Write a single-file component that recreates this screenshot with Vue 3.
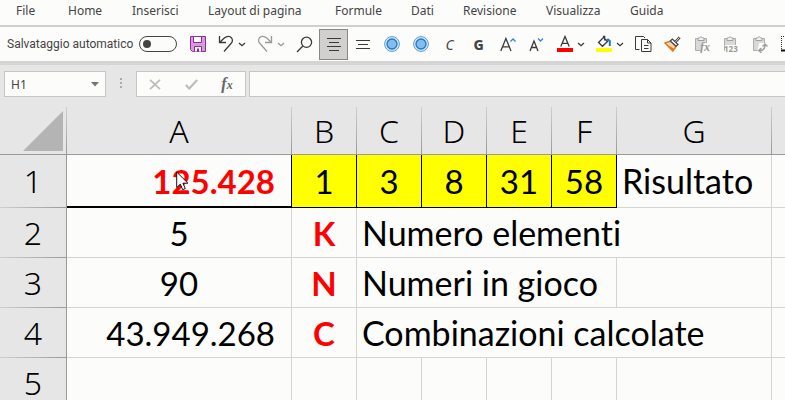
<script setup>
import { ref } from 'vue'

const tabs = ['File', 'Home', 'Inserisci', 'Layout di pagina', 'Formule', 'Dati', 'Revisione', 'Visualizza', 'Guida']
const columns = ['A', 'B', 'C', 'D', 'E', 'F', 'G', '']
const drawn = [1, 3, 8, 31, 58]
const autosave = ref(false)
const cellName = ref('H1')
const formula = ref('')
</script>

<template>
  <div class="excel">
    <nav class="tabs">
      <a v-for="tab in tabs" :key="tab" href="#">{{ tab }}</a>
    </nav>

    <div class="toolbar">
      <label class="autosave">
        <span>Salvataggio automatico</span>
        <input v-model="autosave" type="checkbox" />
      </label>

      <button class="tool" aria-label="Salva">
        <svg width="16" height="16" viewBox="0 0 16 16">
          <path d="M.5.5h15v15h-13l-2-2z" fill="#d89add" stroke="#8f2d9c" />
          <path d="M3.5.5h8v6h-8zM4.5 15.500v-5h7v5" fill="#fff" stroke="#8f2d9c" />
          <path d="M7 12.500h2V16H7z" fill="#8f2d9c" />
        </svg>
      </button>
      <button class="tool split" aria-label="Annulla">
        <svg width="16" height="18" viewBox="0 0 16 18" class="line">
          <path d="M1.500 1v6.500H8M1.800 7.200L6.300 3C9 .7 12 .8 13.600 3c1.300 2 .8 4.200-.8 5.800L6 16.500" />
        </svg>
        <svg class="chev" width="8" height="5" viewBox="0 0 8 5"><path d="M1 1l3 2.700L7 1" /></svg>
      </button>
      <button class="tool split faded" aria-label="Ripeti">
        <svg width="16" height="18" viewBox="0 0 16 18" class="line">
          <path d="M14.500 1v6.500H8M14.200 7.200L9.700 3C7 .7 4 .8 2.400 3c-1.300 2-.8 4.200.8 5.800L10 16.500" />
        </svg>
        <svg class="chev" width="8" height="5" viewBox="0 0 8 5"><path d="M1 1l3 2.700L7 1" /></svg>
      </button>
      <button class="tool" aria-label="Cerca">
        <svg width="17" height="17" viewBox="0 0 17 17" class="line">
          <circle cx="10.500" cy="6.300" r="5.100" /><path d="M6.800 10L1 16" />
        </svg>
      </button>
      <button class="tool pressed" aria-label="Centra">
        <svg width="14" height="14" viewBox="0 0 14 14" class="rows">
          <path d="M0 1.500h14M2 5.500h10M0 9.500h14M2 13.500h10" />
        </svg>
      </button>
      <button class="tool" aria-label="Allinea al centro">
        <svg width="14" height="11" viewBox="0 0 14 11" class="rows">
          <path d="M0 1.500h14M2 5.500h10M0 9.500h14" />
        </svg>
      </button>
      <button v-for="n in 2" :key="n" class="tool" :aria-label="`Macro ${n}`">
        <svg width="16" height="16" viewBox="0 0 16 16">
          <circle cx="8" cy="8" r="7.400" fill="#d3e9f8" stroke="#5a9fd4" />
          <circle cx="8" cy="8" r="5" fill="#83bdec" stroke="#2478be" stroke-width="1.300" />
        </svg>
      </button>
      <button class="tool italic">C</button>
      <button class="tool bold">G</button>
      <button class="tool" aria-label="Aumenta dimensione carattere">
        <svg width="16" height="15" viewBox="0 0 16 15" class="line">
          <path d="M.8 14L5.900 1.500 11 14M2.500 9.800h6.800" /><path class="blue" d="M10.500 4.500L13 2l2.500 2.500" />
        </svg>
      </button>
      <button class="tool" aria-label="Riduci dimensione carattere">
        <svg width="15" height="15" viewBox="0 0 15 15" class="line">
          <path d="M1 14L5 4l4 10M2.400 10.500h5.200" /><path class="blue" d="M9 1.500L11.500 4 14 1.500" />
        </svg>
      </button>
      <button class="tool split" aria-label="Colore carattere">
        <svg width="16" height="18" viewBox="0 0 16 18" class="line">
          <path d="M3.800 11.500L8 1.500l4.200 10M5.200 8.300h5.600" /><path d="M0 13h16v4H0z" class="red" />
        </svg>
        <svg class="chev" width="8" height="5" viewBox="0 0 8 5"><path d="M1 1l3 2.700L7 1" /></svg>
      </button>
      <button class="tool split" aria-label="Colore riempimento">
        <svg width="16" height="18" viewBox="0 0 16 18" class="line">
          <path d="M7 3L2.500 7.500 6.500 11.300 11.500 6.500 7.500 2.500V1.500Q8 .8 8.700 1.500V5.500" />
          <path class="drip" d="M10.500 5.500l1.500-1 1.800 1.500V11" />
          <path d="M0 13h16v4H0z" class="yellow" />
        </svg>
        <svg class="chev" width="8" height="5" viewBox="0 0 8 5"><path d="M1 1l3 2.700L7 1" /></svg>
      </button>
      <button class="tool" aria-label="Copia">
        <svg width="17" height="16" viewBox="0 0 17 16" class="rows">
          <path d="M4.500 13.500h-4V.5h8l1.500 1.500M6.500 3.500h6l3.500 3.500v8.500H6.500zM12.500 3.500V7H16M9 9.500h4.500M9 12.500h4.500" />
        </svg>
      </button>
      <button class="tool" aria-label="Copia formato">
        <svg width="17" height="16" viewBox="0 0 17 16">
          <path d="M1 7l5.500-2 5.500 5.500-3.200 4.500z" fill="#fbd3ae" stroke="#e07b1c" stroke-width="1.500" />
          <path d="M3 8.500l7.500 4.500-1.700 2z" fill="#e07b1c" />
          <path d="M8.300 3l5.700 5.500-2 1.800L6.300 5z" fill="#fff" stroke="#444" stroke-width="1.200" />
          <path d="M11.500 5.800L15.700 1.300" stroke="#444" stroke-width="2.600" />
          <path d="M11.500 5.800L15.500 1.500" stroke="#fff" stroke-width=".8" />
        </svg>
      </button>
      <button v-for="kind in ['fx', '123', 'arrow']" :key="kind" class="tool" :aria-label="`Incolla ${kind}`">
        <svg width="16" height="17" viewBox="0 0 16 17">
          <path d="M1.500 2.500h11v12h-11z" fill="#d9d9d9" stroke="#adadad" />
          <path d="M4 4.500V2h1.500Q7 -1 8.500 2H10v2.500z" fill="#f2f2f2" stroke="#a0a0a0" />
          <template v-if="kind === 'fx'">
            <path d="M8 7h8v10H6z" fill="#fcfcfb" />
            <text x="6" y="15" class="mark math">fx</text>
          </template>
          <template v-else-if="kind === '123'">
            <path d="M2 9h14v8H2z" fill="#fcfcfb" />
            <text x="1" y="16" class="mark">123</text>
          </template>
          <template v-else>
            <path d="M7 7h9v10H5z" fill="#fcfcfb" />
            <path d="M8 14.500q5 0 5-6M10.500 10.500L13 8l2.500 2.500M9.500 12l-2.800 2.500 2.800 2.300" fill="none" stroke="#a0a0a0" stroke-width="1.500" />
          </template>
        </svg>
      </button>
      <button class="tool" aria-label="Bordi">
        <svg width="16" height="16" viewBox="0 0 16 16"><path d="M.5 0v14M0 .5h16" stroke="#333" stroke-dasharray="1 1" /><path d="M0 14.500h16" stroke="#111" stroke-width="2" /></svg>
      </button>
    </div>

    <div class="formula-bar">
      <div class="name-box">
        <input v-model="cellName" aria-label="Casella nome" />
        <button aria-label="Apri elenco nomi"><svg width="8" height="5" viewBox="0 0 8 5"><path d="M0 0h8L4 4.500z" fill="#777" /></svg></button>
      </div>
      <svg class="grip" width="2" height="12" viewBox="0 0 2 12"><path d="M0 0h2v2H0zM0 4h2v2H0zM0 8h2v2H0z" fill="#aaa" /></svg>
      <div class="entry">
        <button aria-label="Annulla immissione"><svg width="12" height="11" viewBox="0 0 12 11"><path d="M1 .8l10 9.400M11 .8L1 10.200" stroke="#bcbcbc" stroke-width="1.800" /></svg></button>
        <button aria-label="Conferma"><svg width="13" height="11" viewBox="0 0 13 11"><path d="M.8 6l3.400 3.500L12.200 1" fill="none" stroke="#bcbcbc" stroke-width="2.200" /></svg></button>
        <button class="fx" aria-label="Inserisci funzione">f<small>x</small></button>
      </div>
      <input v-model="formula" class="formula" aria-label="Barra della formula" />
    </div>

    <main class="sheet">
      <table>
        <colgroup>
          <col class="c-head" /><col class="c-wide" /><col v-for="n in 5" :key="n" class="c-num" /><col class="c-text" /><col />
        </colgroup>
        <thead>
          <tr>
            <th class="corner"><svg width="40" height="40" viewBox="0 0 40 40"><path d="M40 0v40H0z" fill="#b4b4b4" /></svg></th>
            <th v-for="c in columns" :key="c" scope="col">{{ c }}</th>
          </tr>
        </thead>
        <tbody>
          <tr class="first">
            <th scope="row">1</th>
            <td class="num red-text total">125.428</td>
            <td v-for="n in drawn" :key="n" class="mid drawn">{{ n }}</td>
            <td>Risultato</td><td></td>
          </tr>
          <tr>
            <th scope="row">2</th>
            <td class="mid">5</td><td class="mid red-text">K</td><td colspan="5">Numero elementi</td><td></td>
          </tr>
          <tr>
            <th scope="row">3</th>
            <td class="mid">90</td><td class="mid red-text">N</td><td colspan="4">Numeri in gioco</td><td></td><td></td>
          </tr>
          <tr>
            <th scope="row">4</th>
            <td class="num">43.949.268</td><td class="mid red-text">C</td><td colspan="5">Combinazioni calcolate</td><td></td>
          </tr>
          <tr>
            <th scope="row">5</th>
            <td v-for="c in columns" :key="c"></td>
          </tr>
        </tbody>
      </table>
      <svg class="pointer" width="13" height="20" viewBox="0 0 13 20">
        <path d="M.7 1v15.500l3.600-3.400 2.400 5.600 2.600-1.100-2.400-5.400h5z" fill="#fff" stroke="#111" />
      </svg>
    </main>
  </div>
</template>

<style>
body {
  overflow: hidden;
}
</style>

<style scoped>
.excel {
  height: 100vh;
  overflow: hidden;
  display: flex;
  flex-direction: column;
  background: #e6e6e6;
  color: #444;
  font: 12px 'Noto Sans', 'Open Sans', sans-serif;
}
.excel * {
  box-sizing: border-box;
}
button,
input {
  margin: 0;
  padding: 0;
  border: 0;
  background: none;
  color: inherit;
  font: inherit;
}
.tabs {
  flex: none;
  height: 27px;
  display: grid;
  grid-template-columns: 52px 64px 76px 127px 76px 52px 83px 84px 1fr;
  padding-left: 16px;
  background: #fcfcfb;
  border-bottom: 2px solid #d2d0ce;
  line-height: 21px;
  white-space: nowrap;
}
.tabs a {
  color: inherit;
  text-decoration: none;
}
.toolbar {
  flex: none;
  height: 38px;
  display: flex;
  align-items: center;
  background: #fcfcfb;
  border-bottom: 4px solid #d5d5d5;
}
.autosave {
  flex: none;
  width: 183px;
  padding: 0 6px 0 7px;
  display: flex;
  align-items: center;
  justify-content: space-between;
  font-family: Roboto, sans-serif;
  white-space: nowrap;
}
.autosave input {
  appearance: none;
  width: 38px;
  height: 16px;
  padding: 3px;
  border: 1px solid #444;
  border-radius: 8px;
}
.autosave input::before {
  content: '';
  display: block;
  width: 8px;
  height: 8px;
  border-radius: 50%;
  background: #444;
}
.autosave input:checked::before {
  margin-left: auto;
}
.tool {
  flex: none;
  width: 29px;
  height: 31px;
  display: flex;
  align-items: center;
  justify-content: center;
}
.split {
  width: 39px;
  gap: 4px;
}
.pressed {
  background: #d2d0ce;
  border: 1px solid #8a8886;
}
.faded {
  opacity: 0.5;
}
.italic {
  font-style: italic;
  font-size: 14px;
}
.bold {
  font-weight: 800;
  font-size: 14px;
}
.line,
.chev {
  fill: none;
  stroke: #3b3a39;
  stroke-width: 1.3px;
}
.rows {
  fill: none;
  stroke: #3b3a39;
}
.blue {
  stroke: #2b88d8;
}
.drip {
  stroke: #2478be;
  stroke-width: 2px;
}
.red {
  fill: #f00;
  stroke: none;
}
.yellow {
  fill: #ff0;
  stroke: none;
}
.mark {
  fill: #999;
  font: bold 8px 'Open Sans', sans-serif;
}
.math {
  font: italic bold 12px 'Liberation Serif', serif;
}
.formula-bar {
  flex: none;
  height: 42px;
  display: flex;
  align-items: center;
  padding: 0 0 4px 4px;
}
.name-box,
.entry,
.formula {
  height: 26px;
  background: #fcfcfb;
  border: 1px solid #c6c6c6;
}
.name-box {
  width: 102px;
  display: flex;
  align-items: center;
  padding: 0 6px;
}
.name-box input {
  flex: 1;
  min-width: 0;
}
.name-box button {
  display: flex;
}
.grip {
  margin: 0 14px;
}
.entry {
  width: 110px;
  display: grid;
  grid-template-columns: repeat(3, 1fr);
  align-items: center;
}
.entry button {
  display: flex;
  align-items: baseline;
  justify-content: center;
}
.entry .fx {
  color: #666;
  font: italic bold 16px 'Liberation Serif', serif;
}
.fx small {
  font-size: 12px;
}
.formula {
  flex: 1;
  min-width: 0;
  margin-left: 3px;
  border-right: 0;
}
.sheet {
  position: relative;
}
table {
  width: 100%;
  table-layout: fixed;
  border-spacing: 0;
  color: #000;
  font: 34px Lato, sans-serif;
  font-variant-ligatures: none;
}
.c-head {
  width: 67px;
}
.c-wide {
  width: 225px;
}
.c-num {
  width: 65px;
}
.c-text {
  width: 155px;
}
th {
  height: 48px;
  padding: 0;
  background: #e6e6e6;
  font: 300 32px/32px 'Noto Sans', 'Open Sans', sans-serif;
}
thead th {
  border-right: 1px solid;
  border-bottom: 1px solid #999;
  border-image: linear-gradient(#d0d0d0, #999) 1;
}
thead .corner {
  padding-right: 3px;
  text-align: right;
}
.corner svg {
  display: block;
  margin-left: auto;
}
tbody th {
  border-right: 1px solid #999;
  border-bottom: 1px solid;
  border-image: linear-gradient(90deg, #d0d0d0, #999) 1;
}
td {
  height: 50px;
  padding: 0 5px;
  background: #fcfcfb;
  border-right: 1px solid #d4d4d4;
  border-bottom: 1px solid #d4d4d4;
  line-height: 40px;
  white-space: nowrap;
}
th:last-child,
td:last-child {
  border-right: 0;
}
tbody th:first-child {
  border-right: 1px solid #999;
}
.first td {
  height: 53px;
}
.num {
  padding-right: 16px;
  font-size: 33px;
  text-align: right;
}
.mid {
  padding: 0;
  font-size: 33px;
  text-align: center;
}
.red-text {
  color: #f00;
  font-weight: 700;
}
.first .total {
  border-right-color: #000;
  border-bottom: 2px solid #000;
}
.first .drawn {
  background: #ff0;
  border-color: #000;
}
.pointer {
  position: absolute;
  left: 176px;
  top: 64px;
}
</style>
